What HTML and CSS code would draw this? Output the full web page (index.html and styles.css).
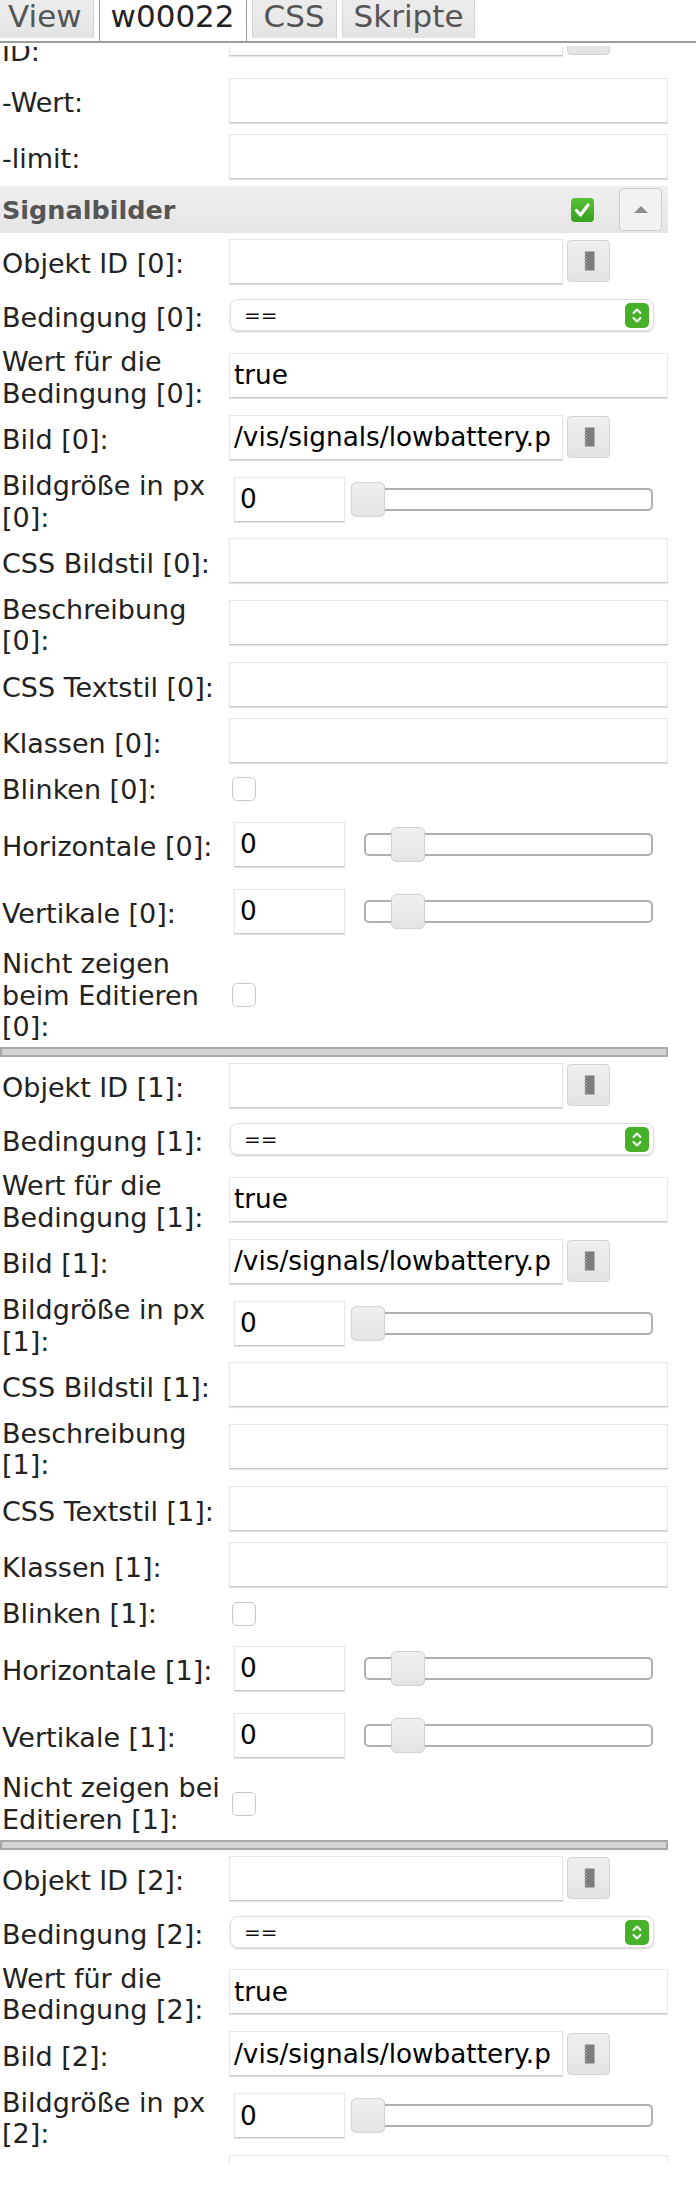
FILE: index.html
```html
<!DOCTYPE html>
<html lang="de">

<head>
    <meta charset="UTF-8">
    <meta name="viewport" content="width=device-width, initial-scale=1.0">
    <title>w00022 - Signalbilder</title>

    <link rel="stylesheet" href="styles.css">
</head>

<body>
    <div class="tabbar">
        <div class="tab-nav">
            <div class="tab">View</div>
            <div class="tab active">w00022</div>
            <div class="tab">CSS</div>
            <div class="tab">Skripte</div>
        </div>
    </div>

    <!-- Inhalt ist nach unten gescrollt, der obere Teil ist abgeschnitten -->
    <div class="panel">
        <div class="panel-inner">

            <div class="row row-top">
                <div class="label label-cut">ID:</div>
                <div class="field">
                    <input class="txt txt-short" type="text">
                    <div class="pick"><svg width="12" height="20" viewBox="0 0 12 20"><rect x="2" y="0.5" width="9.5" height="19" fill="#7c7c7c"/><path d="M1 2.5h2.5M1 5.5h2.5M1 8.5h2.5M1 11.5h2.5M1 14.5h2.5M1 17.5h2.5" stroke="#b5b5b5" stroke-width="1"/></svg></div>
                </div>
            </div>
            <div class="row">
                <div class="label">-Wert:</div>
                <div class="field"><input class="txt" type="text"></div>
            </div>
            <div class="row">
                <div class="label">-limit:</div>
                <div class="field"><input class="txt" type="text"></div>
            </div>

            <div class="group-head">
                <span class="group-title">Signalbilder</span>
                <div class="head-check"><svg width="23" height="24" viewBox="0 0 23 24"><path d="M5.5 12.5l4 4.5 7.5-10" fill="none" stroke="#fff" stroke-width="3.2" stroke-linecap="round" stroke-linejoin="round"/></svg></div>
                <div class="up-btn"><svg width="14" height="7" viewBox="0 0 14 7"><path d="M0 7L7 0L14 7Z" fill="#8c8c8c"/></svg></div>
            </div>

            <!-- Signalbild 0 -->
            <div class="row">
                <div class="label">Objekt ID [0]:</div>
                <div class="field">
                    <input class="txt txt-short" type="text">
                    <div class="pick"><svg width="12" height="20" viewBox="0 0 12 20"><rect x="2" y="0.5" width="9.5" height="19" fill="#7c7c7c"/><path d="M1 2.5h2.5M1 5.5h2.5M1 8.5h2.5M1 11.5h2.5M1 14.5h2.5M1 17.5h2.5" stroke="#b5b5b5" stroke-width="1"/></svg></div>
                </div>
            </div>
            <div class="row">
                <div class="label">Bedingung [0]:</div>
                <div class="field">
                    <div class="select"><span>==</span><svg width="24" height="25" viewBox="0 0 24 25"><rect width="24" height="25" rx="5" fill="#47b12a"/><path d="M8.5 10L12 6.5L15.5 10M8.5 15L12 18.5L15.5 15" fill="none" stroke="#fff" stroke-width="2" stroke-linecap="round" stroke-linejoin="round"/></svg></div>
                </div>
            </div>
            <div class="row">
                <div class="label">Wert für die Bedingung [0]:</div>
                <div class="field"><input class="txt" type="text" value="true"></div>
            </div>
            <div class="row">
                <div class="label">Bild [0]:</div>
                <div class="field">
                    <input class="txt txt-short" type="text" value="/vis/signals/lowbattery.png">
                    <div class="pick"><svg width="12" height="20" viewBox="0 0 12 20"><rect x="2" y="0.5" width="9.5" height="19" fill="#7c7c7c"/><path d="M1 2.5h2.5M1 5.5h2.5M1 8.5h2.5M1 11.5h2.5M1 14.5h2.5M1 17.5h2.5" stroke="#b5b5b5" stroke-width="1"/></svg></div>
                </div>
            </div>
            <div class="row">
                <div class="label">Bildgröße in px [0]:</div>
                <div class="field">
                    <input class="num" type="text" value="0">
                    <div class="slider slider-size"><div class="handle"></div></div>
                </div>
            </div>
            <div class="row">
                <div class="label">CSS Bildstil [0]:</div>
                <div class="field"><input class="txt" type="text"></div>
            </div>
            <div class="row">
                <div class="label">Beschreibung [0]:</div>
                <div class="field"><input class="txt" type="text"></div>
            </div>
            <div class="row">
                <div class="label">CSS Textstil [0]:</div>
                <div class="field"><input class="txt" type="text"></div>
            </div>
            <div class="row">
                <div class="label">Klassen [0]:</div>
                <div class="field"><input class="txt" type="text"></div>
            </div>
            <div class="row">
                <div class="label">Blinken [0]:</div>
                <div class="field"><div class="check"></div></div>
            </div>
            <div class="row row-slider">
                <div class="label">Horizontale [0]:</div>
                <div class="field">
                    <input class="num" type="text" value="0">
                    <div class="slider slider-pos"><div class="handle"></div></div>
                </div>
            </div>
            <div class="row row-slider">
                <div class="label">Vertikale [0]:</div>
                <div class="field">
                    <input class="num" type="text" value="0">
                    <div class="slider slider-pos"><div class="handle"></div></div>
                </div>
            </div>
            <div class="row row-last">
                <div class="label">Nicht zeigen beim Editieren [0]:</div>
                <div class="field"><div class="check"></div></div>
            </div>
            <div class="sep"></div>

            <!-- Signalbild 1 -->
            <div class="row">
                <div class="label">Objekt ID [1]:</div>
                <div class="field">
                    <input class="txt txt-short" type="text">
                    <div class="pick"><svg width="12" height="20" viewBox="0 0 12 20"><rect x="2" y="0.5" width="9.5" height="19" fill="#7c7c7c"/><path d="M1 2.5h2.5M1 5.5h2.5M1 8.5h2.5M1 11.5h2.5M1 14.5h2.5M1 17.5h2.5" stroke="#b5b5b5" stroke-width="1"/></svg></div>
                </div>
            </div>
            <div class="row">
                <div class="label">Bedingung [1]:</div>
                <div class="field">
                    <div class="select"><span>==</span><svg width="24" height="25" viewBox="0 0 24 25"><rect width="24" height="25" rx="5" fill="#47b12a"/><path d="M8.5 10L12 6.5L15.5 10M8.5 15L12 18.5L15.5 15" fill="none" stroke="#fff" stroke-width="2" stroke-linecap="round" stroke-linejoin="round"/></svg></div>
                </div>
            </div>
            <div class="row">
                <div class="label">Wert für die Bedingung [1]:</div>
                <div class="field"><input class="txt" type="text" value="true"></div>
            </div>
            <div class="row">
                <div class="label">Bild [1]:</div>
                <div class="field">
                    <input class="txt txt-short" type="text" value="/vis/signals/lowbattery.png">
                    <div class="pick"><svg width="12" height="20" viewBox="0 0 12 20"><rect x="2" y="0.5" width="9.5" height="19" fill="#7c7c7c"/><path d="M1 2.5h2.5M1 5.5h2.5M1 8.5h2.5M1 11.5h2.5M1 14.5h2.5M1 17.5h2.5" stroke="#b5b5b5" stroke-width="1"/></svg></div>
                </div>
            </div>
            <div class="row">
                <div class="label">Bildgröße in px [1]:</div>
                <div class="field">
                    <input class="num" type="text" value="0">
                    <div class="slider slider-size"><div class="handle"></div></div>
                </div>
            </div>
            <div class="row">
                <div class="label">CSS Bildstil [1]:</div>
                <div class="field"><input class="txt" type="text"></div>
            </div>
            <div class="row">
                <div class="label">Beschreibung [1]:</div>
                <div class="field"><input class="txt" type="text"></div>
            </div>
            <div class="row">
                <div class="label">CSS Textstil [1]:</div>
                <div class="field"><input class="txt" type="text"></div>
            </div>
            <div class="row">
                <div class="label">Klassen [1]:</div>
                <div class="field"><input class="txt" type="text"></div>
            </div>
            <div class="row">
                <div class="label">Blinken [1]:</div>
                <div class="field"><div class="check"></div></div>
            </div>
            <div class="row row-slider">
                <div class="label">Horizontale [1]:</div>
                <div class="field">
                    <input class="num" type="text" value="0">
                    <div class="slider slider-pos"><div class="handle"></div></div>
                </div>
            </div>
            <div class="row row-slider">
                <div class="label">Vertikale [1]:</div>
                <div class="field">
                    <input class="num" type="text" value="0">
                    <div class="slider slider-pos"><div class="handle"></div></div>
                </div>
            </div>
            <div class="row row-last">
                <div class="label">Nicht zeigen bei Editieren [1]:</div>
                <div class="field"><div class="check"></div></div>
            </div>
            <div class="sep"></div>

            <!-- Signalbild 2 -->
            <div class="row">
                <div class="label">Objekt ID [2]:</div>
                <div class="field">
                    <input class="txt txt-short" type="text">
                    <div class="pick"><svg width="12" height="20" viewBox="0 0 12 20"><rect x="2" y="0.5" width="9.5" height="19" fill="#7c7c7c"/><path d="M1 2.5h2.5M1 5.5h2.5M1 8.5h2.5M1 11.5h2.5M1 14.5h2.5M1 17.5h2.5" stroke="#b5b5b5" stroke-width="1"/></svg></div>
                </div>
            </div>
            <div class="row">
                <div class="label">Bedingung [2]:</div>
                <div class="field">
                    <div class="select"><span>==</span><svg width="24" height="25" viewBox="0 0 24 25"><rect width="24" height="25" rx="5" fill="#47b12a"/><path d="M8.5 10L12 6.5L15.5 10M8.5 15L12 18.5L15.5 15" fill="none" stroke="#fff" stroke-width="2" stroke-linecap="round" stroke-linejoin="round"/></svg></div>
                </div>
            </div>
            <div class="row">
                <div class="label">Wert für die Bedingung [2]:</div>
                <div class="field"><input class="txt" type="text" value="true"></div>
            </div>
            <div class="row">
                <div class="label">Bild [2]:</div>
                <div class="field">
                    <input class="txt txt-short" type="text" value="/vis/signals/lowbattery.png">
                    <div class="pick"><svg width="12" height="20" viewBox="0 0 12 20"><rect x="2" y="0.5" width="9.5" height="19" fill="#7c7c7c"/><path d="M1 2.5h2.5M1 5.5h2.5M1 8.5h2.5M1 11.5h2.5M1 14.5h2.5M1 17.5h2.5" stroke="#b5b5b5" stroke-width="1"/></svg></div>
                </div>
            </div>
            <div class="row">
                <div class="label">Bildgröße in px [2]:</div>
                <div class="field">
                    <input class="num" type="text" value="0">
                    <div class="slider slider-size"><div class="handle"></div></div>
                </div>
            </div>
            <div class="row">
                <div class="label">CSS Bildstil [2]:</div>
                <div class="field"><input class="txt" type="text"></div>
            </div>
        </div>
    </div>
</body>

</html>
```

FILE: styles.css
```css
* {
    box-sizing: border-box;
}

body {
    margin: 0;
    background-color: #fff;
    font-family: "DejaVu Sans", sans-serif;
    color: #222;
}

/* Tabs */
.tabbar {
    height: 46px;
    background-color: #fff;
}

.tab-nav {
    display: flex;
    align-items: flex-start;
    height: 43px;
    margin-left: -4px;
    border-bottom: 2px solid #9c9c9c;
}

.tab {
    height: 38px;
    padding: 0 11px;
    margin-right: 5px;
    font-size: 31px;
    line-height: 32px;
    color: #555;
    background: linear-gradient(#ececec, #e4e4e4);
    border-left: 1px solid #d4d4d4;
    border-right: 1px solid #d4d4d4;
}

.tab.active {
    height: 41px;
    color: #222;
    background: #fff;
    border-left: 1px solid #9a9a9a;
    border-right: 1px solid #9a9a9a;
}

/* Inhalt */
.panel {
    width: 668px;
    height: 2117px;
    overflow: hidden;
}

.panel-inner {
    margin-top: -46px;
}

.row {
    display: flex;
    align-items: center;
}

.row-top {
    padding-bottom: 4.5px;
}

.row-slider {
    padding-top: 11px;
}

.row-last {
    padding-top: 4px;
}

.label {
    flex: none;
    width: 229px;
    padding: 5px 3px 0 2px;
    font-size: 27px;
    line-height: 31.4px;
}

/* erste Zeile des Labels ist weggescrollt */
.label-cut {
    padding-top: 36.4px;
}

.field {
    flex: 1;
    display: flex;
    align-items: center;
}

.txt {
    width: 100%;
    height: 45px;
    margin: 5.5px 0;
    padding: 0 4px;
    border: 1px solid #e6e6e6;
    border-bottom-color: #c8c8c8;
    box-shadow: 0 1px 1px rgba(0, 0, 0, 0.1);
    font-family: "DejaVu Sans", sans-serif;
    font-size: 26.3px;
    color: #000;
    background-color: #fff;
    outline: none;
}

.txt-short {
    width: 334px;
    padding-right: 10px;
}

.num {
    width: 111px;
    height: 45px;
    margin: 5.5px 0 5.5px 5px;
    padding: 0 5px;
    border: 1px solid #e6e6e6;
    border-bottom-color: #c8c8c8;
    box-shadow: 0 1px 1px rgba(0, 0, 0, 0.1);
    font-family: "DejaVu Sans", sans-serif;
    font-size: 26.3px;
    color: #000;
    outline: none;
}

.pick {
    width: 43px;
    height: 42px;
    margin-left: 4px;
    display: flex;
    align-items: center;
    justify-content: center;
    border: 1px solid #d2d2d2;
    border-radius: 4px;
    background: linear-gradient(#efefef, #e3e3e3);
}

.select {
    width: 424px;
    height: 32px;
    margin: 10px 0 10px 1px;
    padding: 0 4px 0 13px;
    display: flex;
    align-items: center;
    justify-content: space-between;
    border: 1px solid #dedede;
    border-radius: 8px;
    box-shadow: 0 1px 2px rgba(0, 0, 0, 0.2);
    font-size: 20px;
    color: #111;
}

.check {
    width: 24px;
    height: 24px;
    margin: 5px 0 0 3px;
    border: 1px solid #c9c9c9;
    border-radius: 5px;
    background-color: #fff;
}

.slider {
    position: relative;
    height: 23px;
    border: 2px solid #b0b0b0;
    border-radius: 5px;
    background-color: #fff;
}

.slider-size {
    width: 302px;
    margin-left: 6px;
}

.slider-pos {
    width: 289px;
    margin-left: 19px;
}

.handle {
    position: absolute;
    top: -8px;
    left: 25px;
    width: 34px;
    height: 35px;
    border: 1px solid #d2d2d2;
    border-radius: 5px;
    background: linear-gradient(#efefef, #e4e4e4);
}

.slider-size .handle {
    left: -2px;
}

.sep {
    height: 10px;
    margin-top: 5px;
    border: 2px solid #a9a9a9;
    background-color: #d4d4d4;
}

/* Gruppenkopf */
.group-head {
    height: 47px;
    margin-top: 2px;
    padding-left: 2px;
    display: flex;
    align-items: center;
    background: linear-gradient(#efefef, #e9e9e9 60%, #e4e4e4);
}

.group-title {
    font-size: 25.5px;
    font-weight: bold;
    color: #555;
}

.head-check {
    width: 23px;
    height: 24px;
    margin-left: auto;
    border-radius: 4px;
    background: linear-gradient(#56c235, #37a11d);
}

.head-check svg {
    display: block;
}

.up-btn {
    width: 43px;
    height: 43px;
    margin: 0 6px 0 25px;
    display: flex;
    align-items: center;
    justify-content: center;
    border: 1.5px solid #cdcdcd;
    border-radius: 4px;
    background-color: #f2f2f2;
}
```
